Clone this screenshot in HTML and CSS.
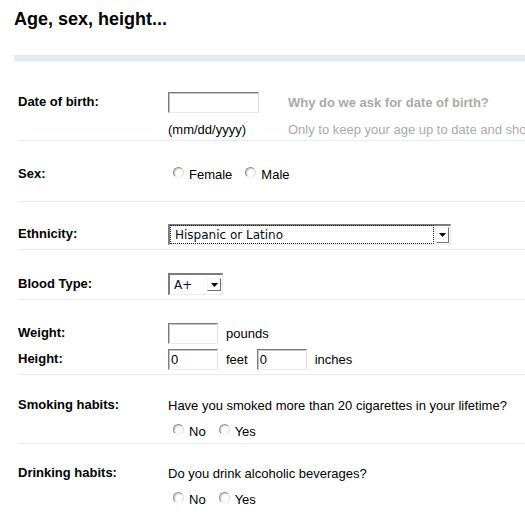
FILE: index.html
```html
<!DOCTYPE html>
<html lang="en">
<head>
    <meta charset="UTF-8">
    <meta name="viewport" content="width=device-width, initial-scale=1.0">
    <title>Age, sex, height</title>
    <link rel="stylesheet" href="styles.css">
</head>
<body>
    <div class="page">
        <h1 class="title">Age, sex, height...</h1>
        <div class="divider"></div>

        <form class="profile">
            <!-- Date of birth -->
            <div class="row row-dob">
                <div class="label">Date of birth:</div>
                <div class="dob">
                    <div class="line"><input class="text date" type="text"></div>
                    <div class="line hint-title">Why do we ask for date of birth?</div>
                    <div class="line">(mm/dd/yyyy)</div>
                    <div class="line hint">Only to keep your age up to date and show it on your profile.</div>
                </div>
            </div>

            <!-- Sex -->
            <div class="row row-sex">
                <div class="label">Sex:</div>
                <div class="field">
                    <div class="line">
                        <label class="radio"><span class="dot"></span>Female</label>
                        <label class="radio"><span class="dot"></span>Male</label>
                    </div>
                </div>
            </div>

            <!-- Ethnicity -->
            <div class="row row-ethnicity">
                <div class="label">Ethnicity:</div>
                <div class="field">
                    <div class="line">
                        <div class="select ethnicity">
                            <span class="value focused">Hispanic or Latino</span>
                            <span class="arrow">
                                <svg width="7" height="4" viewBox="0 0 7 4"><path d="M0 0h7L3.5 4z" fill="#000"/></svg>
                            </span>
                        </div>
                    </div>
                </div>
            </div>

            <!-- Blood type -->
            <div class="row row-blood">
                <div class="label">Blood Type:</div>
                <div class="field">
                    <div class="line">
                        <div class="select blood">
                            <span class="value">A+</span>
                            <span class="arrow">
                                <svg width="7" height="4" viewBox="0 0 7 4"><path d="M0 0h7L3.5 4z" fill="#000"/></svg>
                            </span>
                        </div>
                    </div>
                </div>
            </div>

            <!-- Weight / height -->
            <div class="row row-body">
                <div class="labels">
                    <div class="label">Weight:</div>
                    <div class="label">Height:</div>
                </div>
                <div class="field">
                    <div class="line"><input class="text short" type="text"><span class="unit">pounds</span></div>
                    <div class="line">
                        <input class="text short" type="text" value="0"><span class="unit">feet</span>
                        <input class="text short" type="text" value="0"><span class="unit">inches</span>
                    </div>
                </div>
            </div>

            <!-- Smoking -->
            <div class="row row-habit">
                <div class="label">Smoking habits:</div>
                <div class="field">
                    <div class="line">Have you smoked more than 20 cigarettes in your lifetime?</div>
                    <div class="line">
                        <label class="radio"><span class="dot"></span>No</label>
                        <label class="radio"><span class="dot"></span>Yes</label>
                    </div>
                </div>
            </div>

            <!-- Drinking -->
            <div class="row row-habit last">
                <div class="label">Drinking habits:</div>
                <div class="field">
                    <div class="line">Do you drink alcoholic beverages?</div>
                    <div class="line">
                        <label class="radio"><span class="dot"></span>No</label>
                        <label class="radio"><span class="dot"></span>Yes</label>
                    </div>
                </div>
            </div>
        </form>
    </div>
</body>
</html>
```

FILE: styles.css
```css
/* General Styles */
* {
    margin: 0;
    padding: 0;
    box-sizing: border-box;
}

html,
body {
    overflow: hidden;
}

body {
    font-family: "Liberation Sans", Arial, sans-serif;
    font-size: 13px;
    color: #000;
    background-color: #fff;
}

.page {
    width: 640px;
    padding-left: 14px;
}

/* Heading */
.title {
    margin-top: 9px;
    font-size: 18px;
    line-height: 20px;
    font-weight: bold;
}

.divider {
    margin-top: 26px;
    height: 6px;
    background-color: #e3eaf7;
}

/* Form rows */
.profile {
    margin-left: 4px;
}

.row {
    display: flex;
    border-bottom: 1px solid #e4ecf6;
}

.row.last {
    border-bottom: none;
}

.row-dob {
    padding-top: 30px;
}

.row-sex {
    padding: 22px 0 16px;
}

.row-ethnicity {
    padding: 21px 0 4px;
}

.row-blood {
    padding: 23px 0 4px;
}

.row-body {
    padding: 22px 0 4px;
}

.row-habit {
    padding: 19px 0 1px;
}

.row-habit.last {
    padding-top: 18px;
}

.label {
    flex: none;
    width: 150px;
    height: 22px;
    line-height: 22px;
    font-weight: bold;
}

.labels {
    display: flex;
    flex-direction: column;
    gap: 4px;
}

.field {
    display: flex;
    flex-direction: column;
    gap: 4px;
}

.line {
    display: flex;
    align-items: center;
    height: 22px;
    white-space: nowrap;
}

/* Date of birth grid */
.dob {
    display: grid;
    grid-template-columns: 120px auto;
    row-gap: 5px;
}

.hint-title {
    color: #aaa;
    font-weight: bold;
}

.hint {
    color: #aaa;
}

/* Text inputs */
.text {
    height: 21px;
    font-family: "Liberation Sans", Arial, sans-serif;
    font-size: 13px;
    padding: 1px 2px 0;
    border: 1px solid;
    border-color: #7c7c7c #e2e2e2 #ececec #7c7c7c;
    box-shadow: inset 1px 1px 0 #c4c4c4;
    background-color: #fff;
    outline: none;
}

.text.date {
    width: 91px;
}

.text.short {
    width: 50px;
}

.unit {
    margin: 0 9px 0 8px;
}

/* Selects */
.select {
    display: flex;
    align-items: center;
    border-style: solid;
    border-width: 2px 1px 1px 2px;
    border-color: #7c7c7c #e6e6e6 #eeeeee #7c7c7c;
    background-color: #fff;
    font-family: "DejaVu Sans", sans-serif;
    font-size: 12px;
    color: #0a0a1a;
}

.select .value {
    flex: 1;
    padding-left: 4px;
}

.select .arrow {
    display: flex;
    align-items: center;
    justify-content: center;
    flex: none;
    border: 1px solid;
    border-color: #f4f4f4 #6f6f6f #6f6f6f #f4f4f4;
    background-color: #fff;
}

.select.ethnicity {
    width: 283px;
    height: 21px;
}

.select.ethnicity .value.focused {
    height: 19px;
    line-height: 18px;
    padding-left: 4px;
    border: 1px dotted #222;
}

.select.ethnicity .arrow {
    width: 13px;
    height: 16px;
    margin: 0 1px 0 2px;
}

.select.blood {
    width: 55px;
    height: 22px;
}

.select.blood .value {
    padding-left: 4px;
}

.select.blood .arrow {
    width: 14px;
    height: 13px;
    margin-right: 1px;
}

/* Radio buttons */
.radio {
    display: inline-flex;
    align-items: center;
    margin: 0 8px 0 5px;
}

.dot {
    width: 11px;
    height: 11px;
    margin: 0 5px 4px 0;
    border-radius: 50%;
    border: 1px solid;
    border-color: #8e8e8e #dcdcdc #f0f0f0 #8e8e8e;
    box-shadow: inset 1px 1px 1px #c8c8c8;
    background-color: #fff;
}
```
